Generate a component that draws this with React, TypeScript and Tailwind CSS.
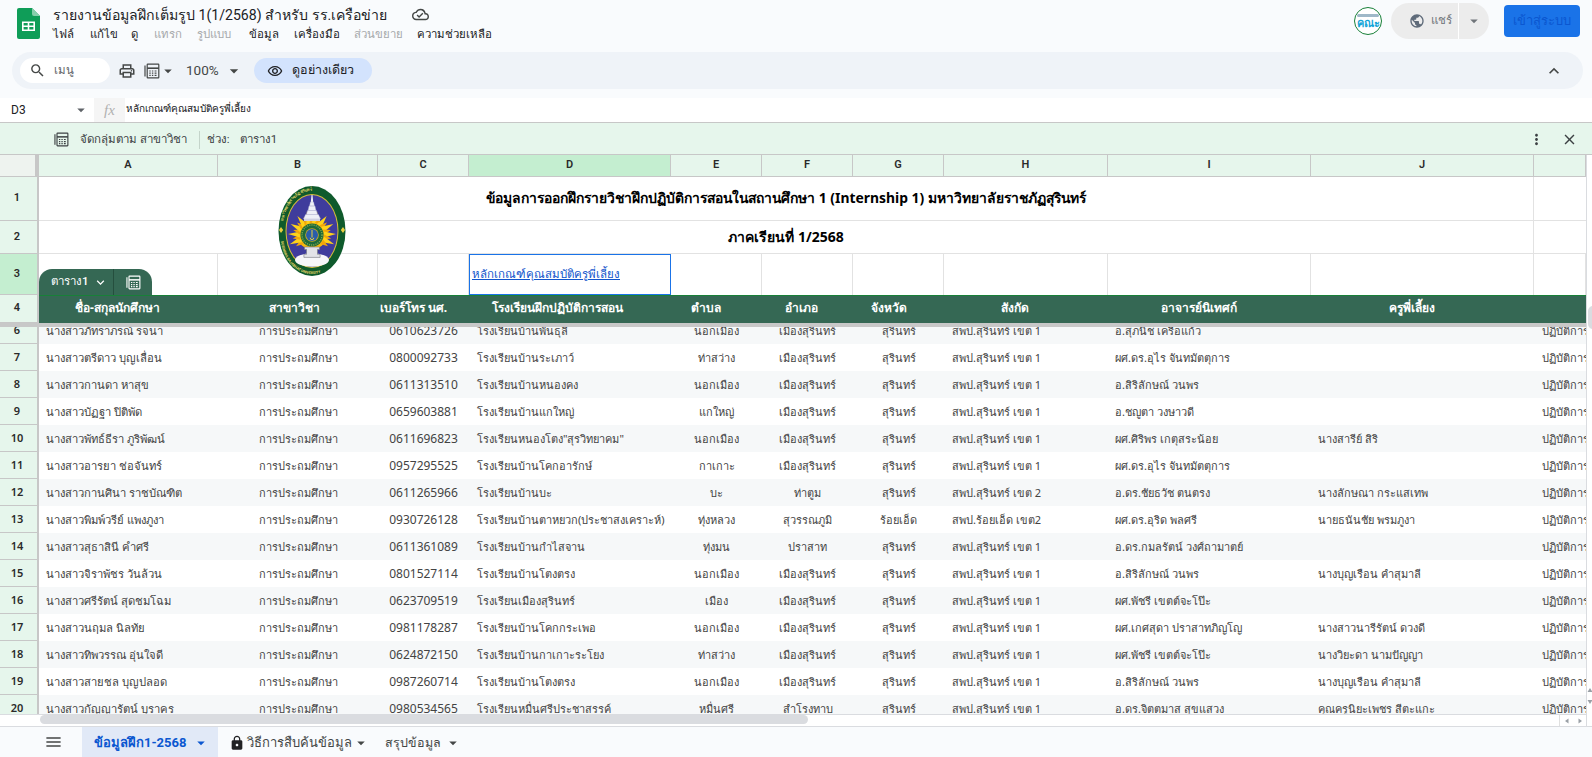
import React from "react";
import {
  MdOutlineCloudDone, MdSearch, MdOutlinePrint, MdOutlineRemoveRedEye, MdPublic, MdLock, MdMenu, MdClose, MdMoreVert,
  MdKeyboardArrowUp, MdArrowDropDown, MdKeyboardArrowDown,
} from "react-icons/md";

const COLS = "grid grid-cols-[179px_160px_91px_202px_91px_91px_91px_164px_203px_223px_52px]";
const A = "นอกเมือง", M = "เมืองสุรินทร์", S = "สุรินทร์", H1 = "สพป.สุรินทร์ เขต 1", U = "การประถมศึกษา", K = "ปฏิบัติการสอน";

const rows: string[][] = [
  ["6", "นางสาวภัทราภรณ์ รจนา", "0610623726", "โรงเรียนบ้านพันธุลี", A, M, S, H1, "อ.สุภนิช เครือแก้ว", ""],
  ["7", "นางสาวตรีดาว บุญเลื่อน", "0800092733", "โรงเรียนบ้านระเภาว์", "ท่าสว่าง", M, S, H1, "ผศ.ดร.อุไร จันทมัตตุการ", ""],
  ["8", "นางสาวกานดา หาสุข", "0611313510", "โรงเรียนบ้านหนองคง", A, M, S, H1, "อ.สิริลักษณ์ วนพร", ""],
  ["9", "นางสาวบัฏฐา ปิติพัด", "0659603881", "โรงเรียนบ้านแกใหญ่", "แกใหญ่", M, S, H1, "อ.ชญูตา วงษาวดี", ""],
  ["10", "นางสาวพัทธ์ธีรา ภูริพัฒน์", "0611696823", "โรงเรียนหนองโตง\"สุรวิทยาคม\"", A, M, S, H1, "ผศ.ศิริพร เกตุสระน้อย", "นางสารีย์ สิริ"],
  ["11", "นางสาวอารยา ช่อจันทร์", "0957295525", "โรงเรียนบ้านโคกอารักษ์", "กาเกาะ", M, S, H1, "ผศ.ดร.อุไร จันทมัตตุการ", ""],
  ["12", "นางสาวกานศินา ราชบัณฑิต", "0611265966", "โรงเรียนบ้านบะ", "บะ", "ท่าตูม", S, "สพป.สุรินทร์ เขต 2", "อ.ดร.ชัยธวัช ตนตรง", "นางลักษณา กระแสเทพ"],
  ["13", "นางสาวพิมพ์วรีย์ แพงภูงา", "0930726128", "โรงเรียนบ้านตาหยวก(ประชาสงเคราะห์)", "ทุ่งหลวง", "สุวรรณภูมิ", "ร้อยเอ็ด", "สพป.ร้อยเอ็ด เขต2", "ผศ.ดร.อุริด พลศรี", "นายธนันชัย พรมภูงา"],
  ["14", "นางสาวสุธาสินี คำศรี", "0611361089", "โรงเรียนบ้านกำไสจาน", "ทุ่งมน", "ปราสาท", S, H1, "อ.ดร.กมลรัตน์ วงศ์ถามาตย์", ""],
  ["15", "นางสาวจิราพัชร วันล้วน", "0801527114", "โรงเรียนบ้านโตงตรง", A, M, S, H1, "อ.สิริลักษณ์ วนพร", "นางบุญเรือน คำสุมาลี"],
  ["16", "นางสาวศรีรัตน์ สุดชมโฉม", "0623709519", "โรงเรียนเมืองสุรินทร์", "เมือง", M, S, H1, "ผศ.พัชรี เขตต์จะโป๊ะ", ""],
  ["17", "นางสาวนฤมล นิลทัย", "0981178287", "โรงเรียนบ้านโคกกระเพอ", A, M, S, H1, "ผศ.เกศสุดา ปราสาทภิญโญ", "นางสาวนารีรัตน์ ดวงดี"],
  ["18", "นางสาวทิพวรรณ อุ่นใจดี", "0624872150", "โรงเรียนบ้านกาเกาะระโยง", "ท่าสว่าง", M, S, H1, "ผศ.พัชรี เขตต์จะโป๊ะ", "นางวิยะดา นามปัญญา"],
  ["19", "นางสาวสายชล บุญปลอด", "0987260714", "โรงเรียนบ้านโตงตรง", A, M, S, H1, "อ.สิริลักษณ์ วนพร", "นางบุญเรือน คำสุมาลี"],
  ["20", "นางสาวกัญญารัตน์ บุราคร", "0980534565", "โรงเรียนหมื่นศรีประชาสรรค์", "หมื่นศรี", "สำโรงทาบ", S, H1, "อ.ดร.จิตตมาส สุขแสวง", "คุณครูนิยะเพชร สีตะแกะ"],
];

function TableIcon({ className = "" }: { className?: string }) {
  return (
    <svg viewBox="0 0 16 16" className={className} fill="none" stroke="currentColor" strokeWidth="1.2">
      <path d="M1 2.5v11" />
      <rect x="3.2" y="1.2" width="11.6" height="13.6" rx="0.6" />
      <path d="M3.2 5.2h11.6" strokeWidth="1.6" />
      <path d="M5.3 8h1.4M7.9 8h1.4M10.6 8h1.9M5.3 10.2h1.4M7.9 10.2h1.4M10.6 10.2h1.9M5.3 12.4h1.4M7.9 12.4h1.4M10.6 12.4h1.9" strokeWidth="1.2" />
    </svg>
  );
}

function SheetsLogo() {
  return (
    <svg viewBox="0 0 23 31" className="w-[23px] h-[31px] shrink-0">
      <path d="M2 0h13l8 8v21a2 2 0 0 1-2 2H2a2 2 0 0 1-2-2V2a2 2 0 0 1 2-2z" fill="#0f9d58" />
      <path d="M15 0l8 8h-6a2 2 0 0 1-2-2z" fill="#87ceac" />
      <path d="M5 13.5h13v9.5H5z" fill="#fff" />
      <path d="M6.6 15.1h4.1v2.3H6.6zM12.3 15.1h4.1v2.3h-4.1zM6.6 19h4.1v2.4H6.6zM12.3 19h4.1v2.4h-4.1z" fill="#0f9d58" />
    </svg>
  );
}

function Seal() {
  const rays = Array.from({ length: 21 }, (_, i) => -125 + i * 12.5);
  return (
    <svg viewBox="0 0 68 90" className="absolute left-[278px] top-[9px] w-[68px] h-[90px] z-10">
      <defs>
        <path id="sealTop" d="M4 45a30 40.5 0 0 1 60 0" />
        <path id="sealBot" d="M3 52a31 36 0 0 0 62 0" />
      </defs>
      <ellipse cx="34" cy="45" rx="33.5" ry="45" fill="#0f5a2c" />
      <ellipse cx="34" cy="45" rx="26.5" ry="37" fill="#d8bd3a" />
      <ellipse cx="34" cy="45" rx="25.5" ry="36" fill="#3f3c9c" />
      <text fontSize="4" fill="#e7d96a" fontWeight="700"><textPath href="#sealTop" startOffset="9%">มหาวิทยาลัยราชภัฏสุรินทร์</textPath></text>
      <text fontSize="3.6" fill="#e7d96a" fontWeight="700"><textPath href="#sealBot" startOffset="3%">SURINDRA RAJABHAT UNIVERSITY</textPath></text>
      <path d="M3 41l2.2 3-2.2 3-2-3zM65 41l2 3-2 3-2.2-3z" fill="#e9cf3d" />
      <circle cx="34" cy="49" r="14.5" fill="#f6b90d" />
      <g transform="translate(34 49)">
        {rays.map((r, i) => (
          <path
            key={i}
            d={i % 2 ? "M-3 -12L0 -24L3 -12z" : "M-2.6 -12L0 -19.5L2.6 -12z"}
            fill={i % 2 ? "#ffd21a" : "#f2a60a"}
            transform={`rotate(${r})`}
          />
        ))}
      </g>
      <path d="M33.5 9h1l.7 7h-2.4z" fill="#f2f3f8" />
      <path d="M32.4 16h3.2l.9 4h-5zM31 20h6l1 4.5h-8zM29.5 24.5h9l1 4h-11zM27.5 28.5h13l2 4.5h-17z" fill="#eef0f7" stroke="#a7a8cc" strokeWidth="0.35" />
      <path d="M26 33h16v2H26z" fill="#cfd1e3" />
      <circle cx="34" cy="49" r="11.5" fill="#1d6a3a" />
      <circle cx="34" cy="49" r="10" fill="none" stroke="#7da34a" strokeWidth="1.4" strokeDasharray="1.2 1" />
      <circle cx="34" cy="49" r="6.8" fill="#c9a92c" />
      <circle cx="34" cy="49" r="6" fill="#2a5dab" />
      <path d="M34 44v7.6m-1.8.2a1.8 1.8 0 1 0 3.6 0" stroke="#e9cf3d" strokeWidth="1" fill="none" />
      <ellipse cx="34" cy="74" rx="17" ry="6.8" fill="#f6f6f9" />
      <path d="M26.5 61h15v2.4h-2v5h2.6v3h-16.2v-3h2.6v-5h-2z" fill="#e3e3e8" stroke="#74757d" strokeWidth="0.6" />
    </svg>
  );
}

function MenuItem({ children, off }: { children: React.ReactNode; off?: boolean }) {
  return <span className={off ? "text-[#a6a8ab]" : "text-[#202124]"}>{children}</span>;
}

function RowHead({ n, hi, className = "" }: { n: string; hi?: boolean; className?: string }) {
  return (
    <div className={`w-[39px] shrink-0 flex items-center justify-center pr-[3px] text-[11px] font-semibold text-[#2a2a2a] border-b border-r-2 border-b-[#c7c7c7] border-r-[#c7c7c7] ${hi ? "bg-[#c4eed0]" : "bg-[#e6f6ec]"} ${className}`}>
      {n}
    </div>
  );
}

function DataRow({ r, i }: { r: string[]; i: number }) {
  const c = "flex items-center overflow-hidden whitespace-nowrap pt-[1px]";
  return (
    <div className="flex h-[27px]">
      <RowHead n={r[0]} className="border-r-[#188038]" />
      <div className={`${COLS} flex-1 text-[11px] text-[#434343] ${i % 2 === 0 ? "bg-[#f6f8f9]" : "bg-white"}`}>
        <div className={`${c} pl-[7px] text-[11.25px]`}>{r[1]}</div>
        <div className={`${c} justify-center`}>{U}</div>
        <div className="flex items-center justify-center overflow-hidden whitespace-nowrap text-[12px]">{r[2]}</div>
        <div className={`${c} pl-[8px]`}>{r[3]}</div>
        <div className={`${c} justify-center`}>{r[4]}</div>
        <div className={`${c} justify-center`}>{r[5]}</div>
        <div className={`${c} justify-center`}>{r[6]}</div>
        <div className={`${c} pl-[8px]`}>{r[7]}</div>
        <div className={`${c} pl-[7px]`}>{r[8]}</div>
        <div className={`${c} pl-[7px]`}>{r[9]}</div>
        <div className={`${c} pl-[8px]`}>{K}</div>
      </div>
    </div>
  );
}

const letters = ["A", "B", "C", "D", "E", "F", "G", "H", "I", "J", ""];
const heads: [string, string][] = [
  ["ชื่อ-สกุลนักศึกษา", "pr-[22px]"],
  ["สาขาวิชา", "pr-[8px]"],
  ["เบอร์โทร นศ.", "pr-[20px]"],
  ["โรงเรียนฝึกปฏิบัติการสอน", "pr-[26px]"],
  ["ตำบล", "pr-[22px]"],
  ["อำเภอ", "pr-[12px]"],
  ["จังหวัด", "pr-[20px]"],
  ["สังกัด", "pr-[22px]"],
  ["อาจารย์นิเทศก์", "pr-[22px]"],
  ["ครูพี่เลี้ยง", "pr-[22px]"],
  ["", ""],
];

function Tri({ d, className = "" }: { d: string; className?: string }) {
  return (
    <svg viewBox="0 0 6 6" className={`w-[6px] h-[6px] ${className}`}>
      <path d={d} fill="#9aa0a6" />
    </svg>
  );
}

export default function App() {
  return (
    <div className="w-[1592px] h-[757px] flex flex-col overflow-hidden bg-[#f9fbfd] font-['Roboto','Noto_Sans',sans-serif] text-[#202124]">
      {/* Title bar */}
      <header className="h-[52px] shrink-0 flex items-start relative">
        <div className="pl-[17px] pt-[8px]"><SheetsLogo /></div>
        <div className="pl-[13px] flex flex-col">
          <div className="h-[29px] flex items-center gap-[25px]">
            <span className="text-[14.1px] leading-[24px] whitespace-nowrap">รายงานข้อมูลฝึกเต็มรูป 1(1/2568) สำหรับ รร.เครือข่าย</span>
            <MdOutlineCloudDone className="w-[17px] h-[17px] text-[#444746]" />
          </div>
          <nav className="h-[12px] flex items-center text-[11.4px] whitespace-nowrap">
            <span className="w-[37px]"><MenuItem>ไฟล์</MenuItem></span>
            <span className="w-[41px]"><MenuItem>แก้ไข</MenuItem></span>
            <span className="w-[23px]"><MenuItem>ดู</MenuItem></span>
            <span className="w-[43px]"><MenuItem off>แทรก</MenuItem></span>
            <span className="w-[52px]"><MenuItem off>รูปแบบ</MenuItem></span>
            <span className="w-[45px]"><MenuItem>ข้อมูล</MenuItem></span>
            <span className="w-[60px]"><MenuItem>เครื่องมือ</MenuItem></span>
            <span className="w-[63px]"><MenuItem off>ส่วนขยาย</MenuItem></span>
            <MenuItem>ความช่วยเหลือ</MenuItem>
          </nav>
        </div>
        <div className="ml-auto flex items-start">
          <div className="mt-[7px] w-[28px] h-[28px] rounded-full border border-[#188038] bg-white overflow-hidden flex flex-col items-center justify-center">
            <span className="h-[3px] w-[22px] bg-[#9fb8c8] rounded-sm mb-[1px]" />
            <span className="text-[11px] leading-[11px] font-bold text-[#12a5d8] whitespace-nowrap">คณะ</span>
          </div>
          <div className="ml-[9px] mt-[3px] w-[98px] h-[36px] rounded-full bg-[#ececec] flex items-center text-[#70757a]">
            <div className="w-[68px] h-full flex items-center pl-[18px] gap-[6px] border-r border-white">
              <MdPublic className="w-[16px] h-[16px] text-[#5f6b7a]" />
              <span className="text-[11.5px] font-medium">แชร์</span>
            </div>
            <MdArrowDropDown className="w-[18px] h-[18px] ml-[6px] text-[#70757a]" />
          </div>
          <button className="ml-[15px] mr-[12px] mt-[5px] w-[76px] h-[32px] rounded-[4px] bg-[#1a73e8] text-[#0b57d0] text-[13px] font-medium flex items-center justify-center">เข้าสู่ระบบ</button>
        </div>
      </header>

      {/* Toolbar */}
      <div className="h-[46px] shrink-0">
        <div className="mx-[12px] w-[1571px] h-[37px] rounded-full bg-[#eff3f8] flex items-center text-[#444746]">
          <div className="ml-[8px] w-[90px] h-[25px] rounded-full bg-white flex items-center pl-[9px] gap-[8px]">
            <MdSearch className="w-[17px] h-[17px]" />
            <span className="text-[11.5px] text-[#5f6368]">เมนู</span>
          </div>
          <MdOutlinePrint className="ml-[8px] w-[18px] h-[18px]" />
          <TableIcon className="ml-[8px] w-[16px] h-[16px]" />
          <MdArrowDropDown className="w-[18px] h-[18px] -mx-[1px]" />
          <span className="ml-[10px] text-[13.5px]">100%</span>
          <MdArrowDropDown className="ml-[5px] w-[20px] h-[20px]" />
          <div className="ml-[10px] w-[118px] h-[25px] rounded-full bg-[#d3e3fd] flex items-center pl-[13px] gap-[9px]">
            <MdOutlineRemoveRedEye className="w-[16px] h-[16px] text-[#202124]" />
            <span className="text-[12.5px] font-medium text-[#202124]">ดูอย่างเดียว</span>
          </div>
          <MdKeyboardArrowUp className="ml-auto mr-[19px] w-[20px] h-[20px]" />
        </div>
      </div>

      {/* Formula bar */}
      <div className="h-[25px] shrink-0 bg-white flex items-center border-b border-[#c7c7c7]">
        <span className="w-[72px] pl-[11px] text-[12px] text-[#202124]">D3</span>
        <MdArrowDropDown className="w-[18px] h-[18px] text-[#5f6368]" />
        <div className="ml-[4px] w-[31px] h-full bg-[#f5f5f5] flex items-center justify-center font-['Liberation_Serif',serif] italic text-[15px] text-[#b0b0b0]">fx</div>
        <span className="pl-[1px] pb-[3px] text-[10px] text-[#202124]">หลักเกณฑ์คุณสมบัติครูพี่เลี้ยง</span>
      </div>

      {/* Filter view band */}
      <div className="h-[32px] shrink-0 pt-[2px] bg-[#e6f6ec] flex items-center border-b border-[#c7c7c7] text-[11.5px] text-[#3c4043]">
        <TableIcon className="ml-[54px] w-[15px] h-[15px] text-[#3c4043]" />
        <span className="ml-[11px]">จัดกลุ่มตาม สาขาวิชา</span>
        <span className="ml-[12px] w-px h-[18px] bg-[#c4d4ca]" />
        <span className="ml-[7px]">ช่วง:</span>
        <span className="ml-[10px]">ตาราง1</span>
        <MdMoreVert className="ml-auto w-[17px] h-[17px] text-[#3c4043]" />
        <MdClose className="ml-[16px] mr-[14px] w-[17px] h-[17px] text-[#3c4043]" />
      </div>

      {/* Grid */}
      <div className="flex-1 min-h-0 flex bg-white">
        <div className="w-[1586px] shrink-0 flex flex-col overflow-hidden">
          {/* Column letters */}
          <div className="h-[22px] shrink-0 flex border-b border-[#c7c7c7]">
            <div className="w-[39px] shrink-0 bg-[#eef3ef] border-r-[4px] border-[#c7c7c7]" />
            <div className={`${COLS} flex-1 text-[11px] font-semibold text-[#2a2a2a]`}>
              {letters.map((l, i) => (
                <div key={i} className={`flex items-center justify-center border-r border-[#c7c7c7] ${l === "D" ? "bg-[#c4eed0]" : "bg-[#e6f6ec]"}`}>{l}</div>
              ))}
            </div>
          </div>

          {/* Frozen rows */}
          <div className="shrink-0 relative">
            <Seal />
            <div className="flex h-[44px]">
              <RowHead n="1" />
              <div className={`${COLS} flex-1 border-b border-[#e2e2e2]`}>
                <div className="col-span-10 flex items-center justify-center pb-[1px] font-['Noto_Sans',sans-serif] text-[13.9px] font-bold text-black border-r border-[#e2e2e2] whitespace-nowrap">ข้อมูลการออกฝึกรายวิชาฝึกปฏิบัติการสอนในสถานศึกษา 1 (Internship 1) มหาวิทยาลัยราชภัฏสุรินทร์</div>
                <div />
              </div>
            </div>
            <div className="flex h-[33px]">
              <RowHead n="2" />
              <div className={`${COLS} flex-1 border-b border-[#e2e2e2]`}>
                <div className="col-span-10 flex items-center justify-center pb-[1px] font-['Noto_Sans',sans-serif] text-[14px] font-bold text-black border-r border-[#e2e2e2]">ภาคเรียนที่ 1/2568</div>
                <div />
              </div>
            </div>
            <div className="flex h-[41px] relative">
              <RowHead n="3" hi />
              <div className={`${COLS} flex-1 font-['Noto_Sans',sans-serif]`}>
                {letters.map((l, i) =>
                  l === "D" ? (
                    <div key={i} className="border-[1.5px] border-[#1a73e8] flex items-center pl-[2px] pb-[1px] text-[11.5px] text-[#1155cc] underline whitespace-nowrap">หลักเกณฑ์คุณสมบัติครูพี่เลี้ยง</div>
                  ) : (
                    <div key={i} className="border-r border-[#e2e2e2]" />
                  )
                )}
              </div>
              <div className="absolute left-[39px] bottom-0 w-[113px] h-[26px] rounded-t-[13px] bg-[#356854] flex items-center text-white z-20">
                <div className="w-[75px] h-full flex items-center pl-[12px] border-r border-[#254f3e]">
                  <span className="text-[11.5px] font-medium">ตาราง1</span>
                  <MdKeyboardArrowDown className="ml-[4px] w-[15px] h-[15px]" />
                </div>
                <TableIcon className="ml-[12px] w-[15px] h-[15px]" />
              </div>
            </div>
            <div className="flex h-[28px]">
              <RowHead n="4" />
              <div className={`${COLS} flex-1 bg-[#356854] border-t border-[#188038] text-[12px] font-bold text-white font-['Noto_Sans',sans-serif]`}>
                {heads.map(([h, p], i) => (
                  <div key={i} className={`flex items-center justify-center whitespace-nowrap pb-[3px] ${p}`}>{h}</div>
                ))}
              </div>
            </div>
            <div className="h-[4px] bg-[#c8c8c8]" />
          </div>

          {/* Scrolled rows */}
          <div className="flex-1 min-h-0 overflow-hidden font-['Noto_Sans',sans-serif]">
            <div className="-mt-[10px]">
              {rows.map((r, i) => (
                <DataRow key={r[0]} r={r} i={i} />
              ))}
            </div>
          </div>

          {/* Horizontal scrollbar */}
          <div className="h-[12px] shrink-0 border-t border-[#dadce0] bg-white flex items-start pl-[40px]">
            <div className="w-[768px] h-[9px] rounded-full bg-[#dadce0]" />
            <div className="ml-auto w-[27px] h-[11px] border-l border-[#e0e0e0] flex items-center justify-around">
              <Tri d="M4.5 0.5v5L1 3z" />
              <Tri d="M1.5 0.5v5L5 3z" />
            </div>
          </div>
        </div>

        {/* Vertical scrollbar */}
        <div className="flex-1 border-l border-[#dadce0] flex flex-col pt-[151px]">
          <div className="h-[23px] w-[5px] rounded-l-full bg-[#dadce0] ml-px" />
          <div className="flex-1" />
          <div className="h-[39px] flex flex-col gap-[6px] items-start">
            <Tri d="M3 1l2.5 4h-5z" />
            <Tri d="M3 5L0.5 1h5z" />
          </div>
        </div>
      </div>

      {/* Sheet tabs */}
      <footer className="h-[31px] shrink-0 bg-[#f9fbfd] border-t border-[#dadce0] flex items-stretch text-[13px] font-medium text-[#444746]">
        <MdMenu className="ml-[44px] w-[19px] h-[30px] text-[#444746]" />
        <div className="ml-[19px] w-[136px] bg-[#e1e9f7] flex items-center pl-[12px] pt-[2px] text-[#0b57d0] font-bold whitespace-nowrap">
          ข้อมูลฝึก1-2568
          <MdArrowDropDown className="ml-[6px] w-[18px] h-[18px]" />
        </div>
        <div className="ml-[12px] flex items-center pt-[2px] whitespace-nowrap">
          <MdLock className="w-[16px] h-[16px] text-[#202124] -ml-[1px]" />
          <span className="ml-[2px]">วิธีการสืบค้นข้อมูล</span>
          <MdArrowDropDown className="w-[18px] h-[18px]" />
        </div>
        <div className="ml-[15px] flex items-center pt-[2px] text-[12.5px] whitespace-nowrap">
          สรุปข้อมูล
          <MdArrowDropDown className="ml-[3px] w-[18px] h-[18px]" />
        </div>
      </footer>
    </div>
  );
}
